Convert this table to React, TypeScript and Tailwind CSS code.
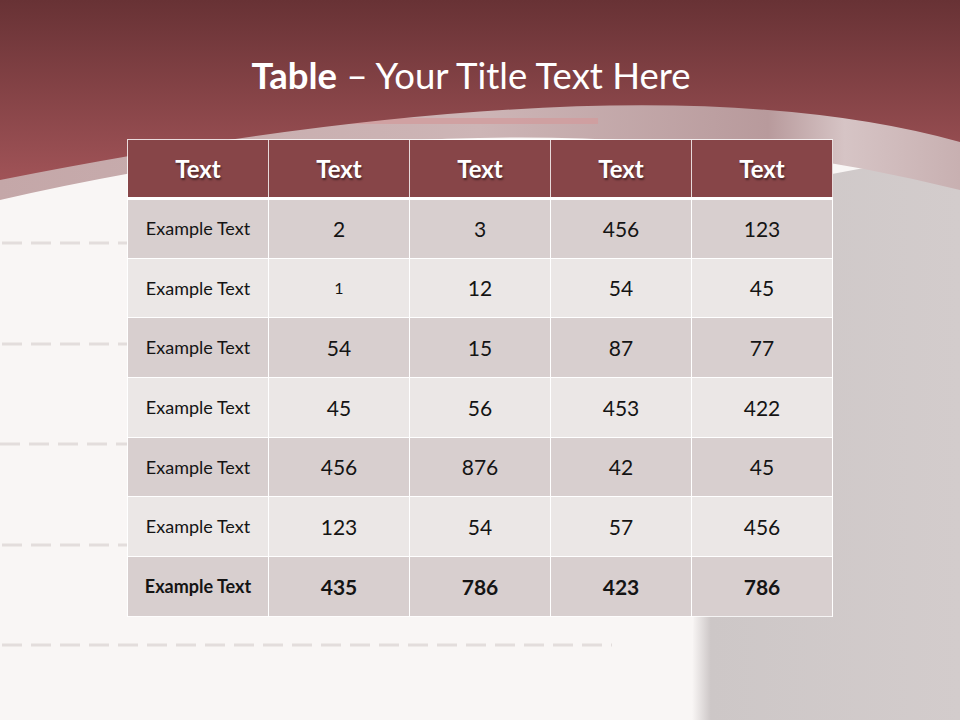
import React from "react";

const header = ["Text", "Text", "Text", "Text", "Text"];

const rows: string[][] = [
  ["Example Text", "2", "3", "456", "123"],
  ["Example Text", "1", "12", "54", "45"],
  ["Example Text", "54", "15", "87", "77"],
  ["Example Text", "45", "56", "453", "422"],
  ["Example Text", "456", "876", "42", "45"],
  ["Example Text", "123", "54", "57", "456"],
  ["Example Text", "435", "786", "423", "786"],
];

const SlideArt = () => (
  <svg className="absolute inset-0" width="960" height="720" viewBox="0 0 960 720">
    <defs>
      <linearGradient id="top" x1="0" y1="0" x2="0" y2="1">
        <stop offset="0" stopColor="#683235" />
        <stop offset="1" stopColor="#a05357" />
      </linearGradient>
      <linearGradient id="band" x1="0" y1="0" x2="1" y2="0">
        <stop offset="0" stopColor="#c4a7a8" />
        <stop offset="0.5" stopColor="#cdb5b6" />
        <stop offset="0.8" stopColor="#b89a9c" />
        <stop offset="0.88" stopColor="#d6c4c5" />
        <stop offset="1" stopColor="#c8b0b1" />
      </linearGradient>
      <linearGradient id="grey" x1="0" y1="0" x2="1" y2="0">
        <stop offset="0" stopColor="#f9f6f5" />
        <stop offset="0.07" stopColor="#cdc7c7" />
        <stop offset="1" stopColor="#d3cccc" />
      </linearGradient>
    </defs>
    <rect width="960" height="720" fill="#f9f6f5" />
    <path d="M692 720 C 692 520, 705 320, 800 180 L 960 150 L 960 720 Z" fill="url(#grey)" />
    <path d="M0 0 H960 V190 Q 520 80 0 200 Z" fill="url(#band)" />
    <rect x="300" y="118" width="298" height="6" fill="#d19c9e" opacity="0.8" />
    <path d="M0 0 H960 V142 Q 640 53 0 180 Z" fill="url(#top)" />
    <g stroke="#e3dddc" strokeWidth="3" strokeDasharray="20 9">
      <line x1="2" y1="243" x2="128" y2="243" />
      <line x1="2" y1="344" x2="128" y2="344" />
      <line x1="0" y1="444" x2="128" y2="444" />
      <line x1="2" y1="545" x2="128" y2="545" />
      <line x1="2" y1="645" x2="612" y2="645" />
    </g>
  </svg>
);

export default function App() {
  return (
    <div
      className="relative w-[960px] h-[720px] overflow-hidden"
      style={{ fontFamily: "Lato, 'Open Sans', sans-serif" }}
    >
      <SlideArt />
      <div className="relative flex flex-col items-center">
        <h1 className="mt-[52px] mr-[18px] text-[36.5px] leading-[46px] text-white">
          <span className="font-bold">Table</span> – Your Title Text Here
        </h1>
        <table className="mt-[41px] border-collapse border border-white/80 table-fixed w-[705px]">
          <thead>
            <tr className="bg-[#874548] h-[59px] border-b-[3px] border-white">
              {header.map((h, i) => (
                <th
                  key={i}
                  className="w-[141px] border-x border-white/80 text-white text-[24px] font-bold [text-shadow:1px_2px_2px_rgba(0,0,0,0.45)]"
                >
                  {h}
                </th>
              ))}
            </tr>
          </thead>
          <tbody>
            {rows.map((r, ri) => (
              <tr
                key={ri}
                className={`h-[59.7px] border-t border-white ${ri % 2 === 0 ? "bg-[#d8cfcf]" : "bg-[#ebe7e6]"} ${ri === rows.length - 1 ? "font-bold" : ""}`}
              >
                {r.map((c, ci) => (
                  <td
                    key={ci}
                    className={`border-x border-white text-center text-[#141414] ${ci === 0 ? "text-[18px]" : c === "1" ? "text-[16px]" : "text-[21px]"}`}
                  >
                    {c}
                  </td>
                ))}
              </tr>
            ))}
          </tbody>
        </table>
      </div>
    </div>
  );
}
